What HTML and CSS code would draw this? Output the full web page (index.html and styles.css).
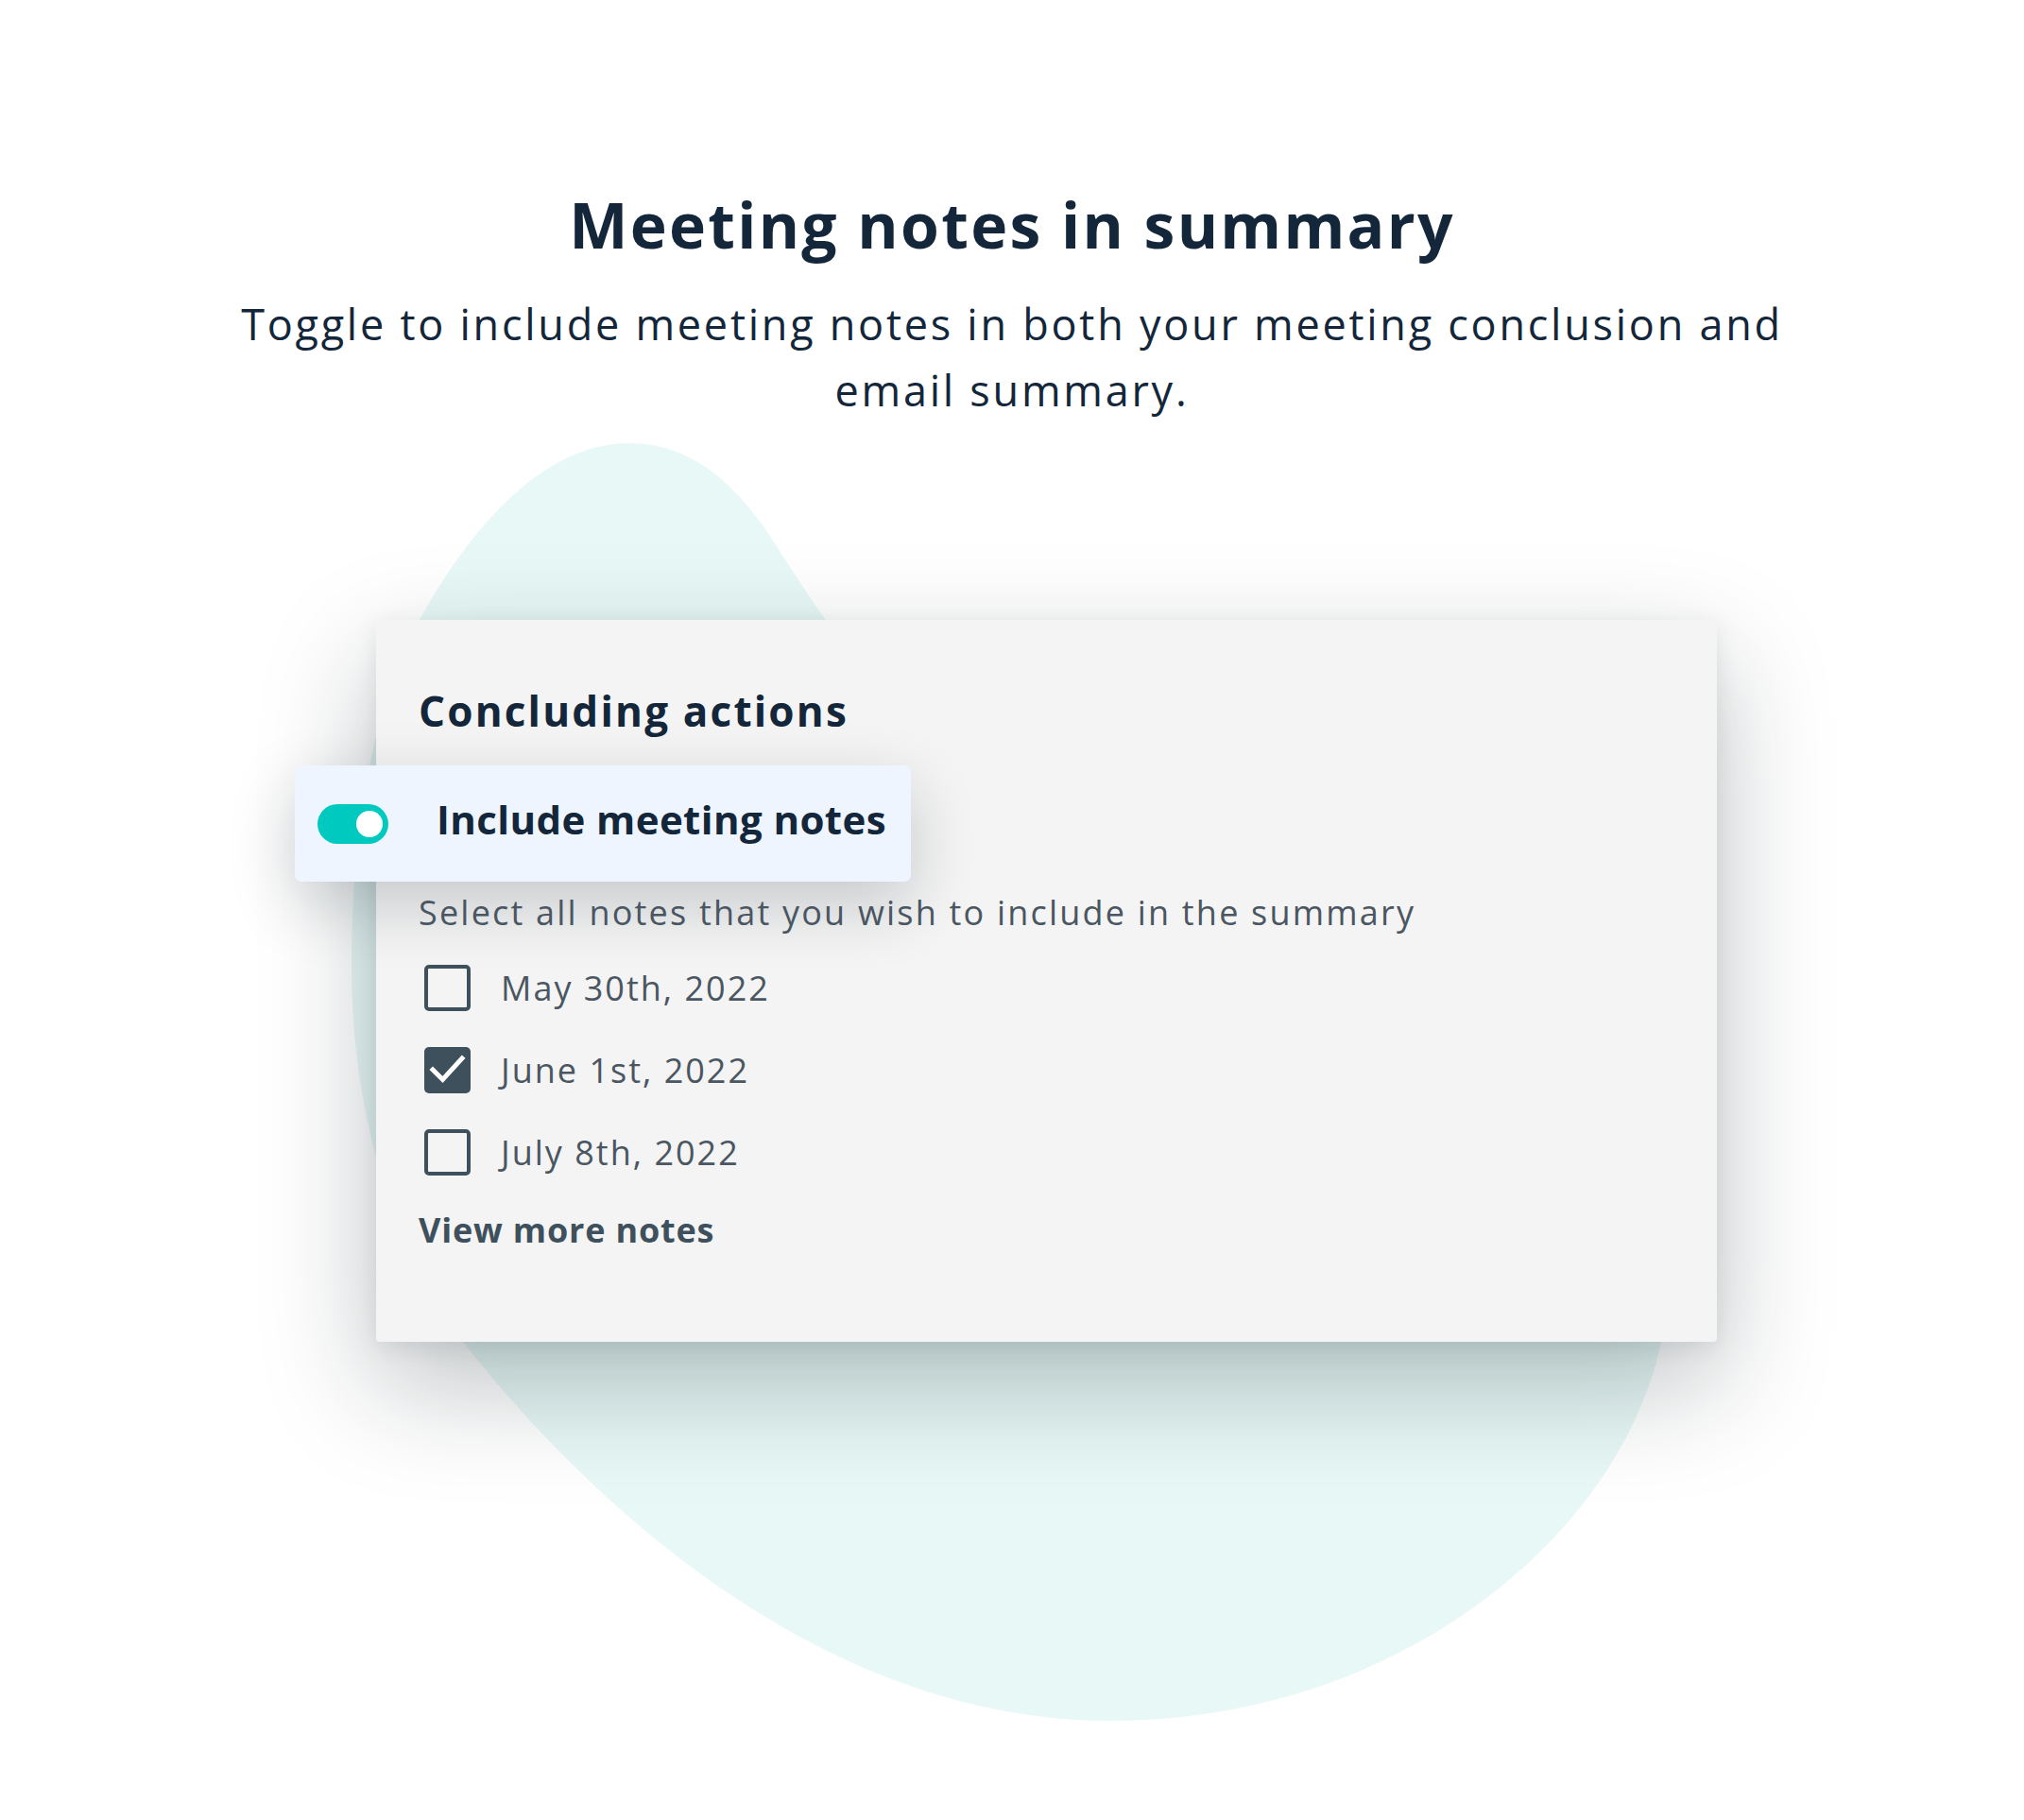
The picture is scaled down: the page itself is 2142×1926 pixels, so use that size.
FILE: index.html
```html
<!DOCTYPE html>
<html lang="en">
<head>
<meta charset="utf-8">
<title>Meeting notes in summary</title>
<link rel="stylesheet" href="styles.css">
</head>
<body>
<main class="page">
  <svg class="blob" viewBox="0 0 2142 1926" width="2142" height="1926" aria-hidden="true">
    <path d="M 666 469 C 730 469 775 510 810 560 C 840 605 860 640 900 690 C 1100 900 1685 1000 1760 1300 C 1805 1540 1540 1821 1175 1821 C 850 1821 600 1560 490 1420 C 420 1330 370 1180 372 1011 C 374 850 400 740 444 656 C 480 590 560 469 666 469 Z" fill="#e8f8f6"/>
  </svg>

  <header class="intro">
    <h1 class="intro-title">Meeting notes in summary</h1>
    <p class="intro-text">Toggle to include meeting notes in both your meeting conclusion and email summary.</p>
  </header>

  <section class="panel">
    <h2 class="panel-title">Concluding actions</h2>

    <div class="toggle-card">
      <span class="switch"><span class="switch-knob"></span></span>
      <span class="toggle-label">Include meeting notes</span>
    </div>

    <p class="hint">Select all notes that you wish to include in the summary</p>

    <ul class="notes">
      <li class="note">
        <span class="box"></span>
        <span class="note-label">May 30th, 2022</span>
      </li>
      <li class="note">
        <span class="box box-checked">
          <svg viewBox="0 0 49 49" width="49" height="49"><polyline points="9,24 19.5,34.5 40,12" fill="none" stroke="#ffffff" stroke-width="5" stroke-linecap="square"/></svg>
        </span>
        <span class="note-label">June 1st, 2022</span>
      </li>
      <li class="note">
        <span class="box"></span>
        <span class="note-label">July 8th, 2022</span>
      </li>
    </ul>

    <a class="more" href="#">View more notes</a>
  </section>
</main>
</body>
</html>
```

FILE: styles.css
```css
* { box-sizing: border-box; }

html, body {
  margin: 0;
  padding: 0;
  background: #ffffff;
}

body {
  font-family: "Open Sans", "Noto Sans", sans-serif;
  color: #13263a;
}

.page {
  position: relative;
  width: 2142px;
  height: 1926px;
  overflow: hidden;
}

.blob {
  position: absolute;
  left: 0;
  top: 0;
  z-index: 0;
}

.intro {
  position: relative;
  z-index: 1;
  padding-top: 198px;
  text-align: center;
}

.intro-title {
  margin: 0;
  font-size: 66px;
  line-height: 79px;
  font-weight: 700;
  letter-spacing: 2.3px;
  color: #13263a;
}

.intro-text {
  margin: 31px auto 0;
  max-width: 1700px;
  font-size: 45px;
  line-height: 70px;
  font-weight: 400;
  letter-spacing: 2.75px;
  color: #13263a;
}

.panel {
  position: relative;
  z-index: 1;
  margin: 208px 0 0 398px;
  width: 1419px;
  padding: 71px 45px 93px;
  background: #f4f4f4;
  border-radius: 4px;
  box-shadow: 0 45px 120px rgba(10, 25, 35, 0.27), 0 6px 24px rgba(10, 25, 35, 0.08);
}

.panel-title {
  margin: 0;
  font-size: 44px;
  line-height: 51px;
  font-weight: 700;
  letter-spacing: 2.2px;
  color: #13263a;
}

.toggle-card {
  display: flex;
  align-items: center;
  gap: 51px;
  margin: 32px 0 0 -131px;
  width: 652px;
  height: 123px;
  padding-left: 24px;
  background: #eef5fe;
  border-radius: 7px;
  box-shadow: 0 24px 70px rgba(10, 25, 35, 0.2);
}

.switch {
  position: relative;
  flex: none;
  width: 75px;
  height: 42px;
  border-radius: 21px;
  background: #00c9c0;
}

.switch-knob {
  position: absolute;
  right: 6px;
  top: 7px;
  width: 28px;
  height: 28px;
  border-radius: 50%;
  background: #ffffff;
}

.toggle-label {
  margin-bottom: 10px;
  font-size: 42px;
  font-weight: 700;
  letter-spacing: 0.4px;
  color: #13263a;
}

.hint {
  margin: 8px 0 0;
  font-size: 36px;
  line-height: 50px;
  letter-spacing: 2.2px;
  color: #4a5661;
}

.notes {
  list-style: none;
  margin: 30px 0 0;
  padding: 0;
  display: flex;
  flex-direction: column;
  gap: 38px;
}

.note {
  display: flex;
  align-items: center;
  height: 49px;
  gap: 32px;
  padding-left: 6px;
}

.box {
  flex: none;
  width: 49px;
  height: 49px;
  border: 4.5px solid #3f505d;
  border-radius: 5px;
  display: flex;
  align-items: center;
  justify-content: center;
}

.box-checked {
  background: #3f505d;
  border: none;
}

.box-checked svg { display: block; }

.note-label {
  font-size: 36px;
  letter-spacing: 2px;
  color: #4a5661;
}

.more {
  display: block;
  margin-top: 33px;
  font-size: 36px;
  line-height: 50px;
  font-weight: 700;
  letter-spacing: 0.8px;
  color: #3f505d;
  text-decoration: none;
}
```
